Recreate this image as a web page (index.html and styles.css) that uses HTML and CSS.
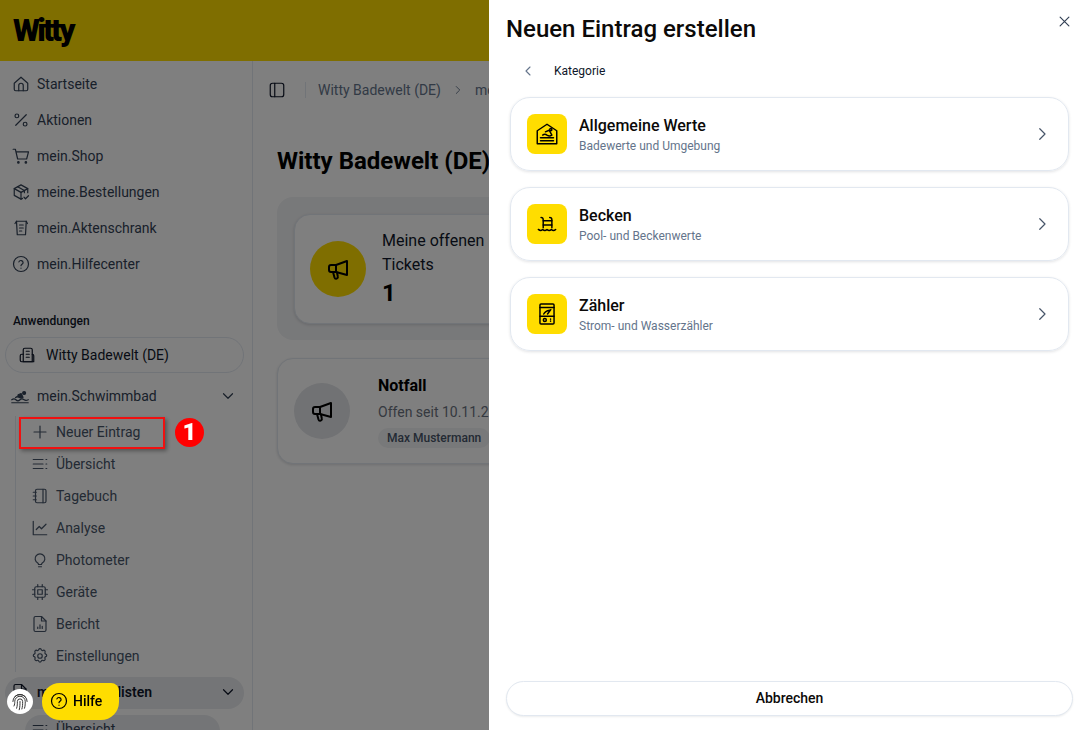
FILE: index.html
```html
<!DOCTYPE html>
<html lang="de">
<head>
    <meta charset="UTF-8">
    <meta name="viewport" content="width=device-width, initial-scale=1.0">
    <title>Neuen Eintrag erstellen</title>
    <link rel="stylesheet" href="styles.css">
</head>
<body>

    <div class="app">
        <header class="topbar"><span class="logo">Witty</span></header>

        <div class="layout">
            <aside class="sidebar">
                <nav class="main-nav">
                    <a class="nav-item">
                        <svg class="icon" viewBox="0 0 24 24"><path d="M3 11l9-8 9 8v8a2 2 0 0 1-2 2H5a2 2 0 0 1-2-2z"/><path d="M9 21v-7a3 3 0 0 1 6 0v7"/></svg>
                        Startseite
                    </a>
                    <a class="nav-item">
                        <svg class="icon" viewBox="0 0 24 24"><path d="M19 5L5 19"/><circle cx="6.5" cy="6.5" r="2.5"/><circle cx="17.5" cy="17.5" r="2.5"/></svg>
                        Aktionen
                    </a>
                    <a class="nav-item">
                        <svg class="icon" viewBox="0 0 24 24"><path d="M1.5 3h3l3 13h12l2.5-9.5H5.5"/><circle cx="8.5" cy="20.5" r="1"/><circle cx="18.5" cy="20.5" r="1"/></svg>
                        mein.Shop
                    </a>
                    <a class="nav-item">
                        <svg class="icon" viewBox="0 0 24 24"><path d="M21 13V7.5L12 2.500 3 7.500v9l9 5 2-1"/><path d="M3 7.500l9 5 9-5"/><path d="M12 12.500v9"/><path d="M7.500 5l9 5v3"/><path d="M16 19l2 2 4-4"/></svg>
                        meine.Bestellungen
                    </a>
                    <a class="nav-item">
                        <svg class="icon" viewBox="0 0 24 24"><path d="M6 3h13l-1 18H7z"/><path d="M4 6l2-3M20.500 6L19 3"/><path d="M10 8h5M10 12h5M10 16h3"/></svg>
                        mein.Aktenschrank
                    </a>
                    <a class="nav-item">
                        <svg class="icon" viewBox="0 0 24 24"><circle cx="12" cy="12" r="10"/><path d="M9.200 9.200a2.900 2.900 0 0 1 5.600 1c0 2-2.800 2.400-2.800 4"/><path d="M12 17.500v.1"/></svg>
                        mein.Hilfecenter
                    </a>
                </nav>

                <div class="section-label">Anwendungen</div>
                <div class="site-select">
                    <svg class="icon" viewBox="0 0 24 24"><path d="M7 21V5a2 2 0 0 1 2-2h8a2 2 0 0 1 2 2v16z"/><path d="M7 11H5a2 2 0 0 0-2 2v6a2 2 0 0 0 2 2h16v-8a2 2 0 0 0-2-2"/><path d="M11 7h4M11 11h4M11 15h4"/></svg>
                    Witty Badewelt (DE)
                </div>

                <div class="group-row">
                    <svg class="icon swimmer" viewBox="0 0 24 24"><path d="M1 17c2-1.500 4-1.500 5.500 0s4 1.500 5.500 0 3.500-1.500 5.500 0 3.500 1 5.500 0"/><path d="M1 21h22"/><path class="swimmer-body" d="M6 14c1.500-1.200 3-1.200 4.500-.2s3.500 1 5.500 0l-2.500-5-4 1.500"/><circle class="swimmer-body" cx="17.500" cy="8" r="2"/></svg>
                    <span class="group-name">mein.Schwimmbad</span>
                    <svg class="chevron" viewBox="0 0 24 24"><path d="M6 9l6 6 6-6"/></svg>
                </div>
                <div class="sub-nav">
                    <a class="sub-item">
                        <svg class="icon" viewBox="0 0 24 24"><path d="M12 4v16M4 12h16"/></svg>
                        Neuer Eintrag
                    </a>
                    <a class="sub-item">
                        <svg class="icon" viewBox="0 0 24 24"><path d="M3 6h13M3 12h13M3 18h13M20 6h1M20 12h1M20 18h1"/></svg>
                        Übersicht
                    </a>
                    <a class="sub-item">
                        <svg class="icon" viewBox="0 0 24 24"><rect x="6" y="3" width="14" height="18" rx="2"/><path d="M3 7h4M3 12h4M3 17h4M16 3v18"/></svg>
                        Tagebuch
                    </a>
                    <a class="sub-item">
                        <svg class="icon" viewBox="0 0 24 24"><path d="M3 3v18h18"/><path d="M7 14l4-4 3 3 6-6"/></svg>
                        Analyse
                    </a>
                    <a class="sub-item">
                        <svg class="icon" viewBox="0 0 24 24"><path d="M9 16a6.500 6.500 0 1 1 6 0c-.6.5-1 1-1 2h-4c0-1-.4-1.500-1-2z"/><path d="M10 21h4"/></svg>
                        Photometer
                    </a>
                    <a class="sub-item">
                        <svg class="icon" viewBox="0 0 24 24"><rect x="5" y="5" width="14" height="14" rx="2"/><rect x="9" y="9" width="6" height="6"/><path d="M9 2v3M15 2v3M9 19v3M15 19v3M2 9h3M2 15h3M19 9h3M19 15h3"/></svg>
                        Geräte
                    </a>
                    <a class="sub-item">
                        <svg class="icon" viewBox="0 0 24 24"><path d="M14 2H6a2 2 0 0 0-2 2v16a2 2 0 0 0 2 2h12a2 2 0 0 0 2-2V8z"/><path d="M14 2v6h6"/><path d="M9 18v-2M12 18v-5M15 18v-3"/></svg>
                        Bericht
                    </a>
                    <a class="sub-item">
                        <svg class="icon" viewBox="0 0 24 24"><circle cx="12" cy="12" r="3"/><path d="M10.300 3.500a1.800 1.800 0 0 1 3.400 0 1.800 1.800 0 0 0 2.600 1 1.800 1.800 0 0 1 2.400 2.400 1.800 1.800 0 0 0 1 2.600 1.800 1.800 0 0 1 0 3.400 1.800 1.800 0 0 0-1 2.600 1.800 1.800 0 0 1-2.400 2.400 1.800 1.800 0 0 0-2.600 1 1.800 1.800 0 0 1-3.400 0 1.800 1.800 0 0 0-2.600-1 1.800 1.800 0 0 1-2.400-2.400 1.800 1.800 0 0 0-1-2.600 1.800 1.800 0 0 1 0-3.400 1.800 1.800 0 0 0 1-2.600 1.800 1.800 0 0 1 2.400-2.400 1.800 1.800 0 0 0 2.600-1z"/></svg>
                        Einstellungen
                    </a>
                </div>

                <div class="group-row group-open">
                    <svg class="icon" viewBox="0 0 24 24"><path d="M14 2H6a2 2 0 0 0-2 2v16a2 2 0 0 0 2 2h12a2 2 0 0 0 2-2V8z"/><path d="M14 2v6h6"/></svg>
                    <span class="group-name">mein.Arbeitslisten</span>
                    <svg class="chevron" viewBox="0 0 24 24"><path d="M6 9l6 6 6-6"/></svg>
                </div>
                <a class="sub-item sub-active">
                    <svg class="icon" viewBox="0 0 24 24"><path d="M3 6h13M3 12h13M3 18h13M20 6h1M20 12h1M20 18h1"/></svg>
                    Übersicht
                </a>
            </aside>

            <main class="content">
                <div class="toolbar">
                    <svg class="icon toolbar-icon" viewBox="0 0 24 24"><rect x="3" y="3" width="18" height="18" rx="3"/><path d="M9 3v18"/></svg>
                    <span class="toolbar-sep"></span>
                    <span class="crumb">Witty Badewelt (DE)</span>
                    <svg class="crumb-arrow" viewBox="0 0 24 24"><path d="M9 6l6 6-6 6"/></svg>
                    <span class="crumb">mein.Schwimmbad</span>
                </div>

                <h1 class="page-title">Witty Badewelt (DE)</h1>

                <section class="stats-panel">
                    <div class="stat-card">
                        <div class="round-icon round-yellow">
                            <svg class="horn" viewBox="0 0 24 24"><path d="M21 4v14L10 15H5a2 2 0 0 1-2-2v-3a2 2 0 0 1 2-2h5z"/><path d="M10 8v7"/><path d="M7 15l1.500 5.500a1.700 1.700 0 0 0 3.300-1L11 15.500"/></svg>
                        </div>
                        <div>
                            <div class="stat-label">Meine offenen Tickets</div>
                            <div class="stat-value">1</div>
                        </div>
                    </div>
                    <div class="stat-card"></div>
                    <div class="stat-card"></div>
                </section>

                <section class="ticket-card">
                    <div class="round-icon round-grey">
                        <svg class="horn" viewBox="0 0 24 24"><path d="M21 4v14L10 15H5a2 2 0 0 1-2-2v-3a2 2 0 0 1 2-2h5z"/><path d="M10 8v7"/><path d="M7 15l1.500 5.500a1.700 1.700 0 0 0 3.300-1L11 15.500"/></svg>
                    </div>
                    <div>
                        <div class="ticket-title">Notfall</div>
                        <div class="ticket-date">Offen seit 10.11.2024</div>
                        <span class="chip">Max Mustermann</span>
                    </div>
                </section>
            </main>
        </div>
    </div>

    <div class="backdrop"></div>

    <!-- Markierung aus der Anleitung -->
    <div class="mark-box"></div>
    <div class="mark-badge">1</div>

    <button class="cookie-btn">
        <svg viewBox="0 0 24 24"><path d="M5 5.500a10 10 0 0 1 14 0"/><path d="M2.500 12a9.500 9.500 0 0 1 19 0"/><path d="M4 18c1-2 1-4 1-6a7 7 0 0 1 14 0c0 3 0 6-1 9"/><path d="M7.500 21c1-3 1-6 1-9a3.500 3.500 0 0 1 7 0c0 4 0 7-1 10"/><path d="M12 12c0 4 0 7-1 11"/></svg>
    </button>
    <button class="help-btn">
        <svg viewBox="0 0 24 24"><circle cx="12" cy="12" r="10"/><path d="M9.200 9.200a2.900 2.900 0 0 1 5.600 1c0 2-2.800 2.400-2.800 4"/><path d="M12 17.500v.1"/></svg>
        Hilfe
    </button>

    <aside class="drawer">
        <button class="drawer-close">
            <svg viewBox="0 0 24 24"><path d="M5 5l14 14M19 5L5 19"/></svg>
        </button>
        <h2 class="drawer-title">Neuen Eintrag erstellen</h2>
        <div class="drawer-back">
            <svg viewBox="0 0 24 24"><path d="M15 6l-6 6 6 6"/></svg>
            <span>Kategorie</span>
        </div>

        <div class="category-list">
            <a class="category">
                <span class="category-icon">
                    <svg viewBox="0 0 24 24"><path d="M3 21V9l9-6 9 6v12z"/><path d="M6 15.500h12M6 18.300h12"/><path d="M8 13c1.500-1.200 2.500-1.200 4 0 1.500 1 3 1 4.500 0L14 8.500l-3.500 1.500"/><circle cx="15.500" cy="8" r="1"/></svg>
                </span>
                <span class="category-text">
                    <span class="category-name">Allgemeine Werte</span>
                    <span class="category-sub">Badewerte und Umgebung</span>
                </span>
                <svg class="category-arrow" viewBox="0 0 24 24"><path d="M9 5l7 7-7 7"/></svg>
            </a>
            <a class="category">
                <span class="category-icon">
                    <svg viewBox="0 0 24 24"><path d="M8.500 15.500V8a2 2 0 0 0-2-2M16.500 15.500V8a2 2 0 0 0-2-2"/><path d="M8.500 9h8M8.500 13h8"/><path d="M4 17c1.500 1.300 2.700 1.300 4 0 1.300 1.300 2.700 1.300 4 0 1.300 1.300 2.700 1.300 4 0 1.300 1.300 2.700 1.300 4 0"/></svg>
                </span>
                <span class="category-text">
                    <span class="category-name">Becken</span>
                    <span class="category-sub">Pool- und Beckenwerte</span>
                </span>
                <svg class="category-arrow" viewBox="0 0 24 24"><path d="M9 5l7 7-7 7"/></svg>
            </a>
            <a class="category">
                <span class="category-icon">
                    <svg viewBox="0 0 24 24"><rect x="5.500" y="2.800" width="13" height="18.400" rx="1"/><path d="M5.500 6h13M5.500 14h13"/><path d="M9 12c.8-1.800 2.500-3 5.500-3.500M12.500 12l3-4"/><circle cx="10" cy="17.600" r="1.400"/><path d="M15.300 16.500v.3M15.300 18.500v.3"/></svg>
                </span>
                <span class="category-text">
                    <span class="category-name">Zähler</span>
                    <span class="category-sub">Strom- und Wasserzähler</span>
                </span>
                <svg class="category-arrow" viewBox="0 0 24 24"><path d="M9 5l7 7-7 7"/></svg>
            </a>
        </div>

        <button class="cancel-btn">Abbrechen</button>
    </aside>

</body>
</html>
```

FILE: styles.css
```css
* {
    box-sizing: border-box;
}

html, body {
    height: 100%;
}

body {
    margin: 0;
    overflow: hidden;
    font-family: Roboto, "Liberation Sans", sans-serif;
    font-size: 14px;
    color: #0f172a;
    background: #fff;
}

svg {
    fill: none;
    stroke: currentColor;
    stroke-width: 1.6;
    stroke-linecap: round;
    stroke-linejoin: round;
    flex-shrink: 0;
}

.app {
    display: flex;
    flex-direction: column;
    height: 730px;
    overflow: hidden;
}

.topbar {
    flex: 0 0 61px;
    display: flex;
    align-items: center;
    padding-left: 13px;
    background: #ffdd00;
}

.logo {
    font-size: 31px;
    font-weight: 900;
    letter-spacing: -2.6px;
    color: #000;
}

.layout {
    flex: 1;
    display: flex;
    min-height: 0;
}

.sidebar {
    flex: 0 0 253px;
    padding: 5px 8px 0 5px;
    border-right: 1px solid #e2e8f0;
    overflow: hidden;
}

.icon {
    width: 18px;
    height: 18px;
}

.nav-item {
    display: flex;
    align-items: center;
    gap: 7px;
    height: 36px;
    padding-left: 7px;
    color: #334155;
}

.section-label {
    margin: 31px 0 8px 8px;
    font-size: 12px;
    line-height: 16px;
    font-weight: 500;
    color: #0f172a;
}

.site-select {
    display: flex;
    align-items: center;
    gap: 10px;
    height: 36px;
    width: 239px;
    padding: 0 0 1px 12px;
    border: 1px solid #e2e8f0;
    border-radius: 18px;
    color: #0f172a;
}

.group-row {
    display: flex;
    align-items: center;
    gap: 8px;
    height: 36px;
    margin-top: 5px;
    width: 239px;
    padding: 0 7px 0 6px;
    color: #334155;
}

.swimmer .swimmer-body {
    fill: currentColor;
}

.group-name {
    flex: 1;
}

.chevron {
    width: 18px;
    height: 18px;
}

.group-open {
    height: 32px;
    padding-bottom: 2px;
    background: #e9ebee;
    border-radius: 16px;
    color: #0f172a;
    font-weight: 600;
}

.sub-nav {
    margin: 2px 0 0 10px;
    padding-left: 5px;
    border-left: 1px solid #e2e8f0;
}

.sub-item {
    display: flex;
    align-items: center;
    gap: 7px;
    height: 32px;
    padding-left: 10px;
    color: #475569;
}

.sub-active {
    width: 195px;
    margin: 6px 0 0 20px;
    border-radius: 16px;
    background: #e9ebee;
    color: #334155;
    padding-left: 6px;
    align-items: flex-start;
    padding-top: 6px;
    height: 40px;
}

.content {
    flex: 1;
    padding: 0 24px;
    background: #fff;
    min-width: 0;
}

.toolbar {
    display: flex;
    align-items: center;
    height: 58px;
    color: #64748b;
}

.toolbar-icon {
    color: #0f172a;
    margin-left: -9px;
}

.toolbar-sep {
    width: 1px;
    height: 16px;
    margin: 0 12px 0 19px;
    background: #e2e8f0;
}

.crumb-arrow {
    width: 14px;
    height: 14px;
    margin: 0 10px;
}

.page-title {
    margin: 26px 0 20px;
    font-size: 24px;
    line-height: 32px;
    font-weight: 700;
    color: #000;
}

.stats-panel {
    display: grid;
    grid-template-columns: repeat(3, 1fr);
    gap: 16px;
    padding: 17px 17px 16px;
    border-radius: 16px;
    background: #f1f2f4;
}

.stat-card {
    display: flex;
    align-items: center;
    gap: 16px;
    height: 110px;
    padding: 0 15px;
    background: #fff;
    border: 1px solid #e2e8f0;
    border-radius: 16px;
    box-shadow: 0 1px 3px rgba(15, 23, 42, 0.15);
}

.round-icon {
    display: flex;
    align-items: center;
    justify-content: center;
    flex: 0 0 56px;
    width: 56px;
    height: 56px;
    border-radius: 50%;
    color: #000;
}

.round-yellow {
    background: #ffdd00;
}

.round-grey {
    background: #e2e4e8;
}

.horn {
    width: 24px;
    height: 24px;
    stroke-width: 2;
}

.stat-label {
    font-size: 16px;
    line-height: 24px;
    color: #0f172a;
}

.stat-value {
    font-size: 24px;
    line-height: 32px;
    font-weight: 700;
    color: #000;
}

.ticket-card {
    display: flex;
    align-items: center;
    gap: 28px;
    height: 106px;
    margin-top: 18px;
    padding: 0 16px;
    background: #fff;
    border: 1px solid #e2e8f0;
    border-radius: 16px;
    box-shadow: 0 1px 3px rgba(15, 23, 42, 0.15);
}

.ticket-title {
    font-size: 16px;
    line-height: 24px;
    font-weight: 700;
    color: #000;
}

.ticket-date {
    margin-top: 2px;
    line-height: 24px;
    color: #6b7280;
}

.chip {
    display: inline-block;
    margin-top: 4px;
    padding: 0 9px;
    font-size: 12px;
    line-height: 20px;
    font-weight: 500;
    color: #475569;
    background: #f1f2f4;
    border-radius: 10px;
}

.backdrop {
    position: fixed;
    inset: 0;
    background: rgba(0, 0, 0, 0.5);
}

.mark-box {
    position: fixed;
    left: 19px;
    top: 417px;
    width: 146px;
    height: 32px;
    border: 2px solid #f01010;
    box-shadow: 2px 2px 4px rgba(0, 0, 0, 0.35);
}

.mark-badge {
    position: fixed;
    left: 175px;
    top: 418px;
    width: 29px;
    height: 29px;
    border-radius: 50%;
    background: #ff0000;
    color: #fff;
    font-size: 24px;
    font-weight: 900;
    line-height: 29px;
    text-align: center;
}

.cookie-btn {
    position: fixed;
    left: 7px;
    top: 689px;
    width: 26px;
    height: 25px;
    padding: 3px 4px;
    display: flex;
    border: none;
    border-radius: 50%;
    background: #fff;
    color: #333;
}

.cookie-btn svg {
    width: 18px;
    height: 19px;
    stroke-width: 1.3;
}

.help-btn {
    position: fixed;
    left: 42px;
    top: 683px;
    display: flex;
    align-items: center;
    gap: 5px;
    width: 77px;
    height: 37px;
    padding: 0 0 1px 8px;
    border: none;
    border-radius: 18px 8px 18px 18px;
    background: #ffdd00;
    color: #000;
    font-family: inherit;
    font-size: 14px;
    font-weight: 500;
}

.help-btn svg {
    width: 18px;
    height: 18px;
}

.drawer {
    position: fixed;
    top: 0;
    right: 0;
    bottom: 0;
    width: 596px;
    display: flex;
    flex-direction: column;
    padding: 0 12px 14px 17px;
    background: #fff;
}

.drawer-close {
    position: absolute;
    top: 14px;
    right: 13px;
    width: 15px;
    height: 15px;
    padding: 0;
    border: none;
    background: none;
    color: #334155;
}

.drawer-close svg {
    display: block;
    width: 15px;
    height: 15px;
    stroke-width: 1.9;
}

.drawer-title {
    margin: 13px 0 0;
    font-size: 24px;
    line-height: 32px;
    font-weight: 500;
    color: #0c0a09;
}

.drawer-back {
    display: flex;
    align-items: center;
    gap: 18px;
    height: 24px;
    margin: 14px 0 0 14px;
    font-size: 12px;
    color: #0f172a;
}

.drawer-back svg {
    width: 16px;
    height: 16px;
    color: #64748b;
}

.category-list {
    display: flex;
    flex-direction: column;
    gap: 16px;
    margin: 14px 4px 0 4px;
}

.category {
    display: flex;
    align-items: center;
    gap: 12px;
    height: 74px;
    padding: 0 17px 0 16px;
    border: 1px solid #e2e8f0;
    border-radius: 20px;
    box-shadow: 0 1px 3px rgba(15, 23, 42, 0.12);
}

.category-icon {
    display: flex;
    align-items: center;
    justify-content: center;
    flex: 0 0 40px;
    height: 40px;
    border-radius: 8px;
    background: #ffdd00;
    color: #000;
}

.category-icon svg {
    width: 26px;
    height: 26px;
    stroke-width: 1.35;
}

.category-text {
    flex: 1;
    display: flex;
    flex-direction: column;
}

.category-name {
    font-size: 16px;
    line-height: 24px;
    font-weight: 500;
    color: #0c0a09;
}

.category-sub {
    font-size: 12px;
    line-height: 16px;
    color: #64748b;
}

.category-arrow {
    width: 18px;
    height: 18px;
    color: #475569;
}

.cancel-btn {
    height: 35px;
    margin-top: auto;
    padding-bottom: 2px;
    border: 1px solid #e2e8f0;
    border-radius: 18px;
    background: #fff;
    box-shadow: 0 1px 2px rgba(15, 23, 42, 0.08);
    font-family: inherit;
    font-size: 14px;
    font-weight: 500;
    color: #0c0a09;
}
```
